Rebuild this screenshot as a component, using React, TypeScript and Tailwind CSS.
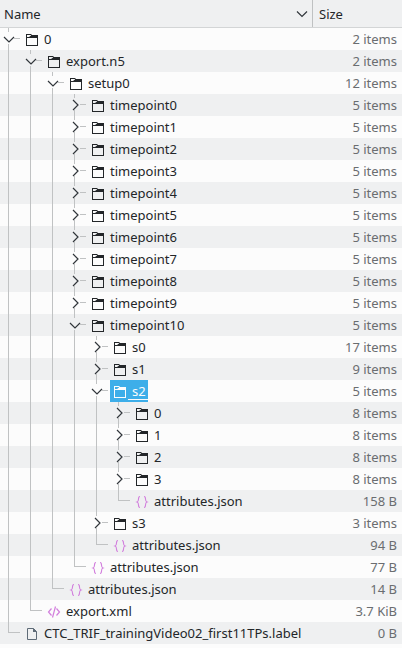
import { useState } from "react";

type Kind = "folder" | "json" | "xml" | "file";
interface Node {
  name: string;
  size: string;
  kind: Kind;
  children?: Node[];
}

const folder = (name: string, size: string, children?: Node[]): Node => ({ name, size, kind: "folder", children });
const json = (size: string): Node => ({ name: "attributes.json", size, kind: "json" });

const TREE: Node[] = [
  folder("0", "2 items", [
    folder("export.n5", "2 items", [
      folder("setup0", "12 items", [
        ...Array.from({ length: 10 }, (_, i) => folder(`timepoint${i}`, "5 items")),
        folder("timepoint10", "5 items", [
          folder("s0", "17 items"),
          folder("s1", "9 items"),
          folder("s2", "5 items", [
            ...["0", "1", "2", "3"].map((n) => folder(n, "8 items")),
            json("158 B"),
          ]),
          folder("s3", "3 items"),
          json("94 B"),
        ]),
        json("77 B"),
      ]),
      json("14 B"),
    ]),
    { name: "export.xml", size: "3.7 KiB", kind: "xml" },
  ]),
  { name: "CTC_TRIF_trainingVideo02_first11TPs.label", size: "0 B", kind: "file" },
];

interface Row {
  node: Node;
  path: string;
  guides: boolean[];
}

function flatten(nodes: Node[], closed: Set<string>, guides: boolean[] = [], parent = ""): Row[] {
  return nodes.flatMap((node, i) => {
    const path = `${parent}/${node.name}`;
    const more = i < nodes.length - 1;
    const own = { node, path, guides };
    return node.children && !closed.has(path)
      ? [own, ...flatten(node.children, closed, [...guides, more], path)]
      : [own];
  });
}

function Icon({ kind }: { kind: Kind }) {
  if (kind === "folder") {
    return (
      <svg width="16" height="16" viewBox="0 0 16 16" className="mt-0.5" fill="currentColor" aria-hidden="true">
        <path d="M2 2h5l1 1h6v11H2zM3 3v10h10V6H3V5h2l2-1.5V3z" fillRule="evenodd" />
      </svg>
    );
  }
  if (kind === "json") {
    return (
      <svg width="16" height="16" viewBox="0 0 16 16" className="mt-0.5" fill="none" stroke="#d27fdd" strokeWidth="1.1" aria-hidden="true">
        <path d="M6 2.5C4.5 2.5 4.5 3.5 4.5 5S4.5 7.5 3 8c1.5.5 1.5 1.5 1.5 3s0 2.5 1.5 2.5M10 2.5c1.5 0 1.5 1 1.5 2.5s0 2.5 1.5 3c-1.5.5-1.5 1.5-1.5 3s0 2.5-1.5 2.5" />
      </svg>
    );
  }
  if (kind === "xml") {
    return (
      <svg width="16" height="16" viewBox="0 0 16 16" className="mt-0.5" fill="none" stroke="#d27fdd" strokeWidth="1.2" aria-hidden="true">
        <path d="M5.5 4.5L2.5 8l3 3.5M10.5 4.5l3 3.5-3 3.5M9.5 2.5l-3 11" />
      </svg>
    );
  }
  return (
    <svg width="16" height="16" viewBox="0 0 16 16" className="mt-0.5" fill="none" stroke="#5e6b77" aria-hidden="true">
      <path d="M3.5 2.5h6l3 3v8h-9z" />
      <path d="M9 2v4h4z" fill="#5e6b77" stroke="none" />
    </svg>
  );
}

function Expander({ open }: { open: boolean }) {
  return (
    <svg width="22" height="22" viewBox="0 0 22 22" fill="none" aria-hidden="true">
      <path d="M8.5 0v4M8.5 16v6M14 10.5h6" stroke="#c0c2c3" />
      <path d={open ? "M4 9l5 5 5-5" : "M7 6l5 5-5 5"} stroke="#31363b" strokeWidth="1.2" />
    </svg>
  );
}

export default function App() {
  const [closed, setClosed] = useState<Set<string>>(new Set());
  const [selected, setSelected] = useState("/0/export.n5/setup0/timepoint10/s2");

  const toggle = (path: string) =>
    setClosed((prev) => {
      const next = new Set(prev);
      if (!next.delete(path)) next.add(path);
      return next;
    });

  return (
    <main className="min-h-screen bg-[#fcfcfc] font-['Noto_Sans',sans-serif] text-[13px] leading-[22px] text-[#232629]">
      <table className="w-full table-fixed border-separate border-spacing-0">
        <colgroup>
          <col />
          <col className="w-[89px]" />
        </colgroup>
        <thead className="bg-[#eff0f1]">
          <tr>
            <th className="border-b border-[#d3d5d6] p-0 text-left font-normal">
              <button className="flex h-[27px] w-full items-center justify-between border-r border-[#bfc1c2] px-1">
                Name
                <svg width="12" height="12" viewBox="0 0 12 12" fill="none" stroke="#31363b" strokeWidth="1.2" aria-hidden="true">
                  <path d="M1 3.5l5 5 5-5" />
                </svg>
              </button>
            </th>
            <th className="border-b border-[#d3d5d6] p-0 text-left font-normal">
              <button className="flex h-[27px] w-full items-center pl-1.5">Size</button>
            </th>
          </tr>
        </thead>
        <tbody>
          {flatten(TREE, closed).map(({ node, path, guides }) => {
            const active = path === selected;
            const open = !!node.children && !closed.has(path);
            return (
              <tr key={path} className="even:bg-[#eff0f1]">
                <td className="p-0">
                  <div className="flex h-[22px]">
                    {guides.map((line, i) => (
                      <span key={i} className="w-[22px] shrink-0 pl-2">
                        {line && <span className="block h-full w-px bg-[#c0c2c3]" />}
                      </span>
                    ))}
                    {node.kind === "folder" ? (
                      <button className="shrink-0" aria-label={`Toggle ${node.name}`} aria-expanded={open} onClick={() => toggle(path)}>
                        <Expander open={open} />
                      </button>
                    ) : (
                      <span className="mr-0.5 w-5 shrink-0 pl-2">
                        <span className="block h-[11px] border-b border-l border-[#c0c2c3]" />
                      </span>
                    )}
                    <button
                      className={`flex items-center whitespace-nowrap pl-0.5 ${active ? "bg-[#3daee9] text-[#fcfcfc]" : ""}`}
                      onClick={() => setSelected(path)}
                    >
                      <Icon kind={node.kind} />
                      <span className={active ? "h-5 self-start border-b border-[#fcfcfc] pr-0.5 pl-1" : "pl-1"}>{node.name}</span>
                    </button>
                  </div>
                </td>
                <td className="p-0 pr-[5px] text-right text-[#6a6d70]">{node.size}</td>
              </tr>
            );
          })}
        </tbody>
      </table>
    </main>
  );
}
